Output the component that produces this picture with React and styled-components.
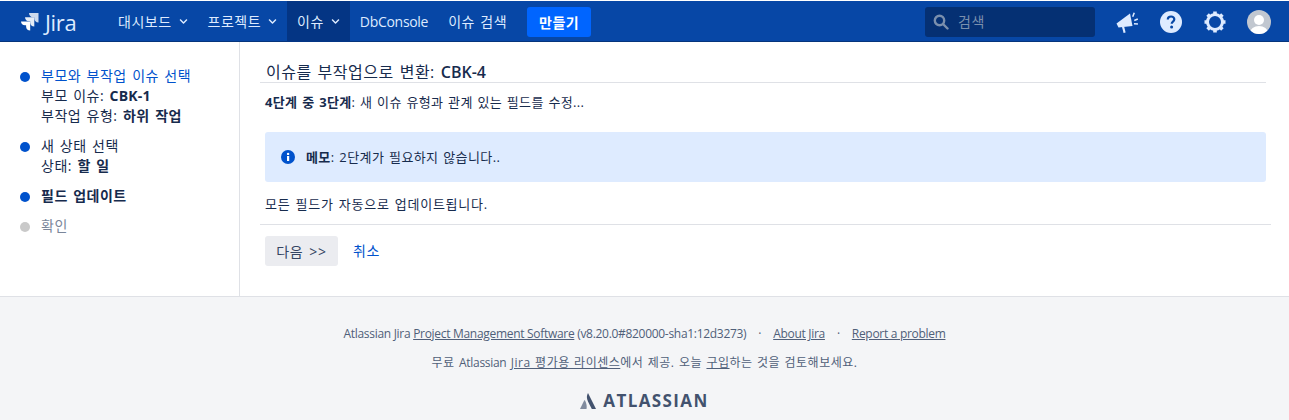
import React from 'react'
import styled, { createGlobalStyle } from 'styled-components'
import { FaChevronDown } from 'react-icons/fa'

const Global = createGlobalStyle`
html, body { margin:0; padding:0; background:#fff; }
body {
  font-family:"Open Sans","Noto Sans CJK KR",sans-serif;
  font-size:14px;
  line-height:20px;
  letter-spacing:0.5px;
  word-spacing:1.3px;
  color:#172b4d;
}
a { color:inherit; text-decoration:none; }
`

const Page = styled.div`
width:1289px;
height:420px;
overflow:hidden;
display:flex;
flex-direction:column;
`

const Header = styled.header`
height:41px;
flex:none;
background:#0747a6;
border-top:1px solid #fff;
box-shadow:inset 0 -1px 0 #06357c;
display:flex;
align-items:stretch;
color:#deebff;
`

const Logo = styled.div`
width:108px;
flex:none;
display:flex;
align-items:center;
padding-left:20px;
box-sizing:border-box;
gap:5px;
color:#deebff;
font-size:22px;
letter-spacing:-0.3px;
`

const Nav = styled.nav`
display:flex;
align-items:stretch;
`

const NavItem = styled.a`
display:flex;
align-items:center;
gap:7px;
padding:0 10px;
background:${(p) => (p.$active ? '#043584' : 'transparent')};
`

const Create = styled.button`
align-self:center;
margin-left:10px;
height:30px;
width:64px;
border:0;
border-radius:3px;
background:#0065ff;
color:#fff;
font-family:inherit;
font-size:14px;
font-weight:700;
letter-spacing:0.5px;
padding:0;
`

const Right = styled.div`
margin-left:auto;
display:flex;
align-items:center;
padding-right:18px;
`

const Search = styled.div`
width:170px;
height:30px;
border-radius:3px;
background:#053073;
display:flex;
align-items:center;
gap:9px;
padding-left:8px;
box-sizing:border-box;
color:#7a8fad;
margin-right:20px;
`

const HeadIcon = styled.div`
width:24px;
height:24px;
display:flex;
align-items:center;
justify-content:center;
margin-left:${(p) => p.$gap || 0}px;
`

const Main = styled.main`
height:254px;
flex:none;
display:flex;
border-bottom:1px solid #dfe1e6;
`

const Side = styled.aside`
width:219px;
flex:none;
border-right:1px solid #dfe1e6;
padding:24px 0 0 20px;
`

const Step = styled.div`
position:relative;
padding-left:21px;
margin-bottom:10px;
color:${(p) => (p.$muted ? '#7a869a' : '#172b4d')};
font-weight:${(p) => (p.$current ? 700 : 400)};
&::before {
  content:'';
  position:absolute;
  left:0;
  top:6px;
  width:10px;
  height:10px;
  border-radius:50%;
  background:${(p) => (p.$muted ? '#c9c9c9' : '#0052cc')};
}
`

const StepTitle = styled.div`
color:${(p) => (p.$link ? '#0052cc' : 'inherit')};
`

const Content = styled.section`
flex:1;
padding:20px 18px 0 20px;
min-width:0;
display:flex;
flex-direction:column;
`

const Title = styled.h2`
margin:0 5px 0 0;
height:20px;
padding:0 5px 0 6px;
font-size:16px;
font-weight:400;
line-height:20px;
color:#172b4d;
border-bottom:1px solid #dfe1e6;
`

const Strong = styled.b`
font-weight:700;
`

const Code = styled.span`
font-weight:${(p) => p.$weight || 700};
letter-spacing:${(p) => p.$spacing || 0}px;
word-spacing:0;
`

const Para = styled.p`
margin:${(p) => p.$top || 0}px 0 0 5px;
font-size:13px;
line-height:20px;
letter-spacing:${(p) => (p.$wide ? 0.75 : 0.35)}px;
word-spacing:1px;
`

const Note = styled.div`
margin:20px 5px 0 5px;
height:50px;
background:#deebff;
border-radius:3px;
display:flex;
align-items:center;
padding-left:16px;
gap:11px;
font-size:13px;
letter-spacing:0.4px;
word-spacing:1px;
`

const Actions = styled.div`
margin-top:10px;
border-top:1px solid #dfe1e6;
padding:11px 0 0 5px;
display:flex;
align-items:center;
gap:15px;
`

const NextButton = styled.button`
height:30px;
width:73px;
border:0;
border-radius:3px;
background:#ebecf0;
color:#344563;
font-family:inherit;
font-size:14px;
letter-spacing:0.7px;
word-spacing:1.5px;
padding:0;
`

const Cancel = styled.a`
color:#0052cc;
`

const Footer = styled.footer`
flex:1;
background:#f4f5f7;
color:#505f79;
font-size:12px;
line-height:16px;
display:flex;
flex-direction:column;
align-items:center;
padding-top:29px;
`

const FootLine = styled.div`
margin-bottom:${(p) => p.$mb || 0}px;
white-space:pre;
letter-spacing:${(p) => (p.$latin ? -0.3 : 0.5)}px;
word-spacing:${(p) => (p.$latin ? 0 : 0.8)}px;
`

const FootLink = styled.a`
text-decoration:underline;
`

const Dot = styled.span`
margin:0 12px;
`

const Brand = styled.div`
display:flex;
align-items:center;
gap:7px;
color:#42526e;
font-size:17px;
font-weight:700;
letter-spacing:1.4px;
margin-top:20px;
line-height:20px;
`

const JiraMark = () => (
  <svg width="20" height="19" viewBox="0 0 20 19" fill="#fff">
    <path d="M9 1h9.500v9.500c-2.500 0-4.200-1.700-4.200-4.200V5.200H13C10.800 5.200 9 3.400 9 1z" opacity=".8" />
    <path d="M5 5.200h9.300v9.300c-2.400 0-4.100-1.700-4.100-4.100V9.300H9C6.800 9.300 5 7.500 5 5.200z" opacity=".9" />
    <path d="M1 9.400h9.200v9.100c-2.400 0-4.100-1.700-4.100-4.100v-1.100H5C2.800 13.300 1 11.600 1 9.400z" />
  </svg>
)

const SearchIcon = () => (
  <svg width="16" height="16" viewBox="0 0 16 16" fill="none" stroke="#7a8fad" strokeWidth="2.400">
    <circle cx="6.500" cy="6.500" r="4.700" />
    <path d="M10 10l4.500 4.500" strokeLinecap="round" />
  </svg>
)

const Megaphone = () => (
  <svg width="24" height="24" viewBox="0 0 24 24" fill="#deebff">
    <path d="M1.500 13.500L15 3.500 17.500 16 3.500 17.500z" />
    <path d="M7 17l2.200-.3 1.400 5.700-2 .5z" />
    <path d="M17 6.500l1.500-4 1.500.6-1.600 4zM19 9.800l3.500-1.500.6 1.400-3.600 1.500zM19 13l4 .3-.1 1.500-4-.3z" />
  </svg>
)

const Help = () => (
  <svg width="22" height="22" viewBox="0 0 22 22">
    <circle cx="11" cy="11" r="11" fill="#deebff" />
    <path d="M7.800 8.500c0-1.900 1.400-3 3.300-3 1.800 0 3.200 1 3.200 2.800 0 2.400-2.600 2.300-2.600 4.400" fill="none" stroke="#0747a6" strokeWidth="2.200" />
    <circle cx="11.600" cy="16" r="1.500" fill="#0747a6" />
  </svg>
)

const Gear = () => (
  <svg width="24" height="24" viewBox="0 0 24 24" fill="none" stroke="#deebff">
    <circle cx="12" cy="12" r="7.500" strokeWidth="3" />
    <path d="M12 1.500v3M12 19.500v3M1.500 12h3M19.500 12h3M4.600 4.600l2.100 2.100M17.300 17.300l2.100 2.100M4.600 19.400l2.100-2.100M17.300 6.700l2.100-2.100" strokeWidth="3.600" />
  </svg>
)

const Avatar = () => (
  <svg width="24" height="24" viewBox="0 0 24 24">
    <defs>
      <clipPath id="av"><circle cx="12" cy="12" r="12" /></clipPath>
    </defs>
    <g clipPath="url(#av)">
      <rect width="24" height="24" fill="#c1c7d0" />
      <circle cx="12" cy="10" r="5" fill="#fff" />
      <ellipse cx="12" cy="23" rx="9" ry="7" fill="#fff" />
    </g>
  </svg>
)

const InfoIcon = () => (
  <svg width="14" height="14" viewBox="0 0 14 14">
    <circle cx="7" cy="7" r="7" fill="#0052cc" />
    <rect x="6" y="6" width="2.200" height="5" fill="#fff" />
    <circle cx="7.100" cy="3.900" r="1.200" fill="#fff" />
  </svg>
)

const AtlassianMark = () => (
  <svg width="16" height="16" viewBox="0 0 16 16" fill="#42526e">
    <path d="M8 0c-1.500 2.500-1.500 5.500 0 8.500l3.800 7.500H16z" />
    <path d="M4.200 7.500L0 16h6.500c.5-2.500.2-5.500-1.500-8.500-.2-.3-.6-.3-.8 0z" opacity=".65" />
  </svg>
)

const Chevron = styled(FaChevronDown)`
width:9px;
height:9px;
`

export default function App() {
  return (
    <Page>
      <Global />
      <Header>
        <Logo>
          <JiraMark />
          Jira
        </Logo>
        <Nav>
          <NavItem>대시보드 <Chevron /></NavItem>
          <NavItem>프로젝트 <Chevron /></NavItem>
          <NavItem $active>이슈 <Chevron /></NavItem>
          <NavItem><Code $weight={400} $spacing={-0.3}>DbConsole</Code></NavItem>
          <NavItem>이슈 검색</NavItem>
          <Create>만들기</Create>
        </Nav>
        <Right>
          <Search><SearchIcon />검색</Search>
          <HeadIcon><Megaphone /></HeadIcon>
          <HeadIcon $gap={20}><Help /></HeadIcon>
          <HeadIcon $gap={20}><Gear /></HeadIcon>
          <HeadIcon $gap={20}><Avatar /></HeadIcon>
        </Right>
      </Header>
      <Main>
        <Side>
          <Step>
            <StepTitle $link>부모와 부작업 이슈 선택</StepTitle>
            <div>부모 이슈: <Code $spacing={0.2}>CBK-1</Code></div>
            <div>부작업 유형: <Strong>하위 작업</Strong></div>
          </Step>
          <Step>
            <StepTitle>새 상태 선택</StepTitle>
            <div>상태: <Strong>할 일</Strong></div>
          </Step>
          <Step $current>
            <StepTitle>필드 업데이트</StepTitle>
          </Step>
          <Step $muted>
            <StepTitle>확인</StepTitle>
          </Step>
        </Side>
        <Content>
          <Title>이슈를 부작업으로 변환: <Code $weight={600}>CBK-4</Code></Title>
          <Para $top={9}><Strong>4단계 중 3단계</Strong>: 새 이슈 유형과 관계 있는 필드를 수정...</Para>
          <Note>
            <InfoIcon />
            <span><Strong>메모</Strong>: 2단계가 필요하지 않습니다..</span>
          </Note>
          <Para $top={12} $wide>모든 필드가 자동으로 업데이트됩니다.</Para>
          <Actions>
            <NextButton>다음 &gt;&gt;</NextButton>
            <Cancel>취소</Cancel>
          </Actions>
        </Content>
      </Main>
      <Footer>
        <FootLine $mb={13} $latin>
          Atlassian Jira <FootLink>Project Management Software</FootLink> (v8.20.0#820000-sha1:12d3273)<Dot>·</Dot><FootLink>About Jira</FootLink><Dot>·</Dot><FootLink>Report a problem</FootLink>
        </FootLine>
        <FootLine>
          무료 <Code $weight={400} $spacing={-0.3}>Atlassian</Code> <FootLink>Jira 평가용 라이센스</FootLink>에서 제공. 오늘 <FootLink>구입</FootLink>하는 것을 검토해보세요.
        </FootLine>
        <Brand><AtlassianMark />ATLASSIAN</Brand>
      </Footer>
    </Page>
  )
}
